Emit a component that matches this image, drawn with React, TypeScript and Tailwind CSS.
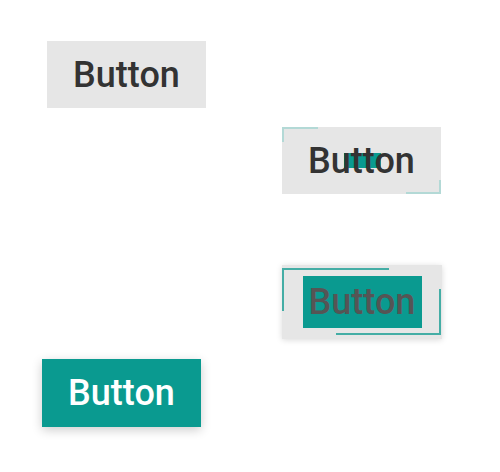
// Four states of the same "Button": idle, hover start, hover mid, active
export default function App() {
  const font = { fontFamily: 'Roboto, "Liberation Sans", sans-serif' };

  return (
    <div className="w-[500px] h-[472px] bg-white relative" style={font}>
      <div className="flex flex-col items-start">
        {/* idle */}
        <button className="ml-[47px] mt-[41px] w-[159px] h-[67px] bg-[#e6e6e6] text-[#333333] text-[36px] font-medium leading-none flex items-center justify-center">
          Button
        </button>

        {/* corners start sliding in */}
        <button className="relative ml-[282px] mt-[19px] w-[159px] h-[67px] bg-[#e6e6e6] text-[#333333] text-[36px] font-medium leading-none flex items-center justify-center">
          <span className="absolute left-0 top-0 w-[36px] h-[2px] bg-[#b3d9d6]" />
          <span className="absolute left-0 top-0 w-[2px] h-[15px] bg-[#b3d9d6]" />
          <span className="absolute right-0 bottom-0 w-[35px] h-[2px] bg-[#b3d9d6]" />
          <span className="absolute right-0 bottom-0 w-[2px] h-[14px] bg-[#b3d9d6]" />
          <span className="absolute left-[62px] top-[26px] w-[37px] h-[15px] bg-[#0a9a90]" />
          <span className="relative">Button</span>
        </button>

        {/* fill expanding */}
        <button className="relative ml-[282px] mt-[71px] w-[160px] h-[74px] bg-[#e6e6e6] shadow-[0_1px_6px_rgba(0,0,0,0.15)] text-[#555555] text-[36px] font-medium leading-none flex items-center justify-center">
          <span className="absolute left-0 top-[3px] w-[107px] h-[2px] bg-[#44ada5]" />
          <span className="absolute left-0 top-[3px] w-[2px] h-[43px] bg-[#44ada5]" />
          <span className="absolute right-[1px] bottom-[4px] w-[105px] h-[2px] bg-[#44ada5]" />
          <span className="absolute right-[1px] bottom-[4px] w-[2px] h-[46px] bg-[#44ada5]" />
          <span className="relative w-[119px] h-[52px] bg-[#0a9a90] flex items-center justify-center">
            Button
          </span>
        </button>

        {/* filled */}
        <button className="ml-[42px] mt-[20px] w-[159px] h-[68px] bg-[#0a9a90] shadow-[0_3px_10px_rgba(0,0,0,0.2)] text-white text-[36px] font-medium leading-none flex items-center justify-center">
          Button
        </button>
      </div>
    </div>
  );
}
